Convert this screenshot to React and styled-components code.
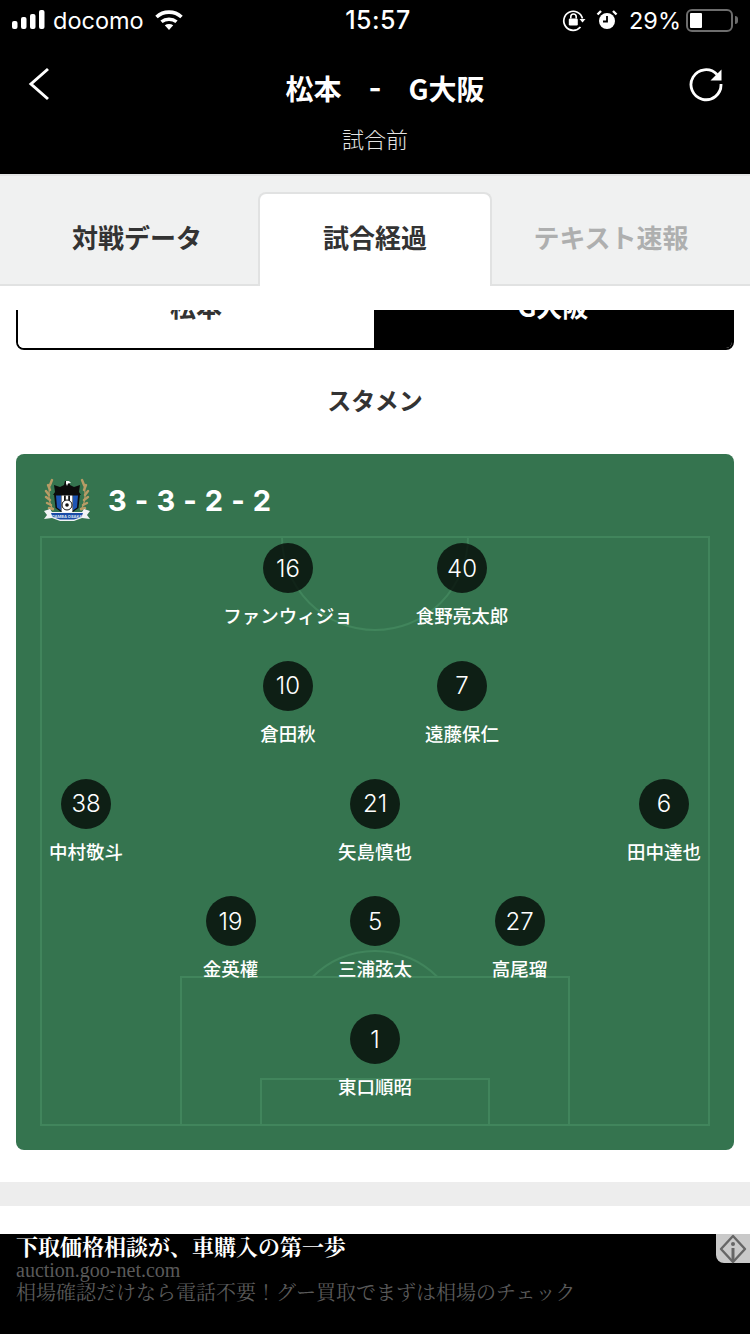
import React from "react";
import styled, { createGlobalStyle } from "styled-components";

const formation = [
  { step: 174, players: [["16", "ファンウィジョ"], ["40", "食野亮太郎"]] },
  { step: 174, players: [["10", "倉田秋"], ["7", "遠藤保仁"]] },
  { step: 289, players: [["38", "中村敬斗"], ["21", "矢島慎也"], ["6", "田中達也"]] },
  { step: 144.5, players: [["19", "金英權"], ["5", "三浦弦太"], ["27", "高尾瑠"]] },
  { step: 174, players: [["1", "東口順昭"]] },
];

const StatusIcons = {
  Signal: () => (
    <svg width="33" height="22" viewBox="0 0 33 22">
      <rect x="0" y="12" width="5.5" height="8" rx="2" fill="#fff" />
      <rect x="9" y="8" width="5.5" height="12" rx="2" fill="#fff" />
      <rect x="18" y="5" width="5.5" height="15" rx="2" fill="#fff" />
      <rect x="27" y="1" width="5.5" height="19" rx="2" fill="#fff" />
    </svg>
  ),
  Wifi: () => (
    <svg width="30" height="22" viewBox="0 0 30 22" fill="none">
      <path d="M2.5 8C9.500 1.500 20.500 1.500 27.500 8" stroke="#fff" strokeWidth="3.600" />
      <path d="M7.500 12.800C11.700 9.300 18.300 9.300 22.500 12.800" stroke="#fff" strokeWidth="3.400" />
      <path d="M10.800 16.200C13.300 14.500 16.700 14.500 19.200 16.200L15 21Z" fill="#fff" />
    </svg>
  ),
  Lock: () => (
    <svg width="24" height="24" viewBox="0 0 24 24" fill="none">
      <path d="M20.500 10.500A9.500 9.500 0 1 0 18.500 19" stroke="#fff" strokeWidth="1.700" />
      <path d="M17.500 11h6l-3 3.600Z" fill="#fff" />
      <rect x="6.800" y="10.500" width="9" height="7" rx="1.200" fill="#fff" />
      <path d="M8.800 10.500V8.700a2.700 2.700 0 0 1 5.400 0V10.500" stroke="#fff" strokeWidth="1.600" />
    </svg>
  ),
  Alarm: () => (
    <svg width="22" height="22" viewBox="0 0 22 22" fill="none">
      <circle cx="11" cy="12" r="8" fill="#fff" />
      <path d="M11 7v5.500H7" stroke="#000" strokeWidth="1.800" />
      <path d="M1.500 5.500 5 2M20.500 5.500 17 2" stroke="#fff" strokeWidth="2.400" />
    </svg>
  ),
};

const TeamCrest = () => (
  <svg width="46" height="46" viewBox="0 0 46 46">
    <g stroke="#b79c66" strokeWidth="2.400" strokeLinecap="round" fill="none">
      <path d="M8 3 6 8M4 8 6 13M2 14 5 18M2 20 6 23M3 26 7 28M5 31 9 32" />
      <path d="M38 3 40 8M42 8 40 13M44 14 41 18M44 20 40 23M43 26 39 28M41 31 37 32" />
      <path d="M7 5C4 14 4 24 9 33M39 5C42 14 42 24 37 33" strokeWidth="1.200" />
    </g>
    <path d="M10 8 16 10 20 8 21 4 25 4 26 8 30 10 36 8 35 15 37 18 H9 L11 15Z" fill="#0c0c0c" />
    <path d="M22 4h3l2 2-3 .6-1 2.400-1-2.400Z" fill="#fff" />
    <path d="M10 17H36L34.500 31 23 39 11.500 31Z" fill="#0c0c0c" />
    <path d="M12 18.500H17V33.500L13 30.500ZM29 18.500H34L33 30.500 29 33.500Z" fill="#1d55b4" />
    <path d="M17.500 18.500H28.500V34.500L23 38 17.500 34.500Z" fill="#fff" />
    <path d="M20 18.500H21.800V26H20ZM24.200 18.500H26V26H24.200Z" fill="#111" />
    <circle cx="23" cy="28" r="5" fill="#fff" stroke="#111" strokeWidth="1" />
    <circle cx="23" cy="28" r="1.800" fill="#111" />
    <path d="M0 34 6 32 8 35H38L40 32 46 34 43 38 46 42 38 41 30 44H16L8 41 0 42 3 38Z" fill="#f2f4f6" />
    <path d="M7 36H39L37.500 40 30 42.500H16L8.500 40Z" fill="#1a4ba6" />
    <CrestText x="23" y="40.500" textAnchor="middle">GAMBA OSAKA</CrestText>
  </svg>
);

const App = () => {
  return (
    <Page>
      <GlobalStyle />
      <TopBar>
        <StatusBar>
          <StatusGroup>
            <StatusIcons.Signal />
            <Carrier>docomo</Carrier>
            <WifiSlot>
              <StatusIcons.Wifi />
            </WifiSlot>
          </StatusGroup>
          <Clock>15:57</Clock>
          <StatusGroup $right>
            <StatusIcons.Lock />
            <AlarmSlot>
              <StatusIcons.Alarm />
            </AlarmSlot>
            <Percent>29%</Percent>
            <Battery>
              <BatteryFill />
            </Battery>
            <BatteryCap />
          </StatusGroup>
        </StatusBar>
        <NavRow>
          <NavButton aria-label="戻る">
            <svg width="24" height="36" viewBox="0 0 24 36" fill="none">
              <path d="M22 3 5 18 22 33" stroke="#fff" strokeWidth="3" />
            </svg>
          </NavButton>
          <MatchTitle>
            <TitleHome>松本</TitleHome>
            <Dash>-</Dash>
            <span>G大阪</span>
          </MatchTitle>
          <NavButton $end aria-label="更新">
            <svg width="36" height="36" viewBox="0 0 36 36" fill="none">
              <path d="M29 8.500A15 15 0 1 0 33 18" stroke="#fff" strokeWidth="2.800" />
              <path d="M33.500 3.500V14.500H22.500Z" fill="#fff" />
            </svg>
          </NavButton>
        </NavRow>
        <MatchState>試合前</MatchState>
      </TopBar>

      <TabBar>
        <Tab>対戦データ</Tab>
        <Tab $active>試合経過</Tab>
        <Tab $disabled>テキスト速報</Tab>
      </TabBar>

      <ScrollArea>
        <TeamToggle>
          <TeamOption>松本</TeamOption>
          <TeamOption $active>G大阪</TeamOption>
        </TeamToggle>

        <SectionTitle>スタメン</SectionTitle>

        <PitchCard>
          <CardHead>
            <TeamCrest />
            <Formation>3 - 3 - 2 - 2</Formation>
          </CardHead>

          <Field>
            <FieldLines viewBox="0 0 670 590" aria-hidden="true">
              <g fill="none" stroke="#41855c" strokeWidth="2">
                <rect x="1" y="1" width="668" height="588" />
                <rect x="141" y="441" width="388" height="148" />
                <rect x="221" y="543" width="228" height="46" />
                <path d="M272.500 441A88 88 0 0 1 397.500 441" />
                <path d="M242 1A93 93 0 0 0 428 1" />
              </g>
            </FieldLines>
            {formation.map((row) => (
              <PlayerRow key={row.players[0][0]} $count={row.players.length} $step={row.step}>
                {row.players.map(([number, name]) => (
                  <Player key={number}>
                    <Number>{number}</Number>
                    <PlayerName>{name}</PlayerName>
                  </Player>
                ))}
              </PlayerRow>
            ))}
          </Field>
        </PitchCard>

        <Divider />
      </ScrollArea>

      <AdBanner>
        <AdTitle>下取価格相談が、車購入の第一歩</AdTitle>
        <AdUrl>auction.goo-net.com</AdUrl>
        <AdText>相場確認だけなら電話不要！グー買取でまずは相場のチェック</AdText>
        <AdInfo>
          <svg width="30" height="30" viewBox="0 0 30 30" fill="none">
            <path d="M15 2 27 15 15 28 3 15Z" stroke="#666" strokeWidth="2.400" strokeLinejoin="round" />
            <circle cx="15" cy="10" r="2" fill="#666" />
            <path d="M15 14v12" stroke="#666" strokeWidth="3" />
          </svg>
        </AdInfo>
      </AdBanner>
    </Page>
  );
};

export default App;

const GlobalStyle = createGlobalStyle`
  html, body {
    margin: 0;
    padding: 0;
    background: #fff;
  }
  * {
    box-sizing: border-box;
  }
`;

const sans = `"Noto Sans CJK JP", "Noto Sans", sans-serif`;
const latin = `Inter, Roboto, "Noto Sans CJK JP", sans-serif`;
const mincho = `"Liberation Serif", "Noto Serif CJK JP", "Noto Sans CJK JP", serif`;

const Page = styled.div`
  width: 750px;
  height: 1334px;
  overflow: hidden;
  display: flex;
  flex-direction: column;
  background: #fff;
  font-family: ${sans};
`;

const TopBar = styled.header`
  height: 174px;
  flex: none;
  background: #000;
  color: #fff;
`;

const StatusBar = styled.div`
  height: 40px;
  padding: 0 12px;
  display: grid;
  grid-template-columns: 1fr auto 1fr;
  align-items: center;
`;

const StatusGroup = styled.div`
  display: flex;
  align-items: center;
  justify-content: ${({ $right }) => ($right ? "flex-end" : "flex-start")};
`;

const Carrier = styled.span`
  margin-left: 8px;
  font-family: ${latin};
  font-size: 23.5px;
  color: #fff;
`;

const WifiSlot = styled.span`
  display: flex;
  margin-left: 10px;
`;

const Clock = styled.span`
  margin-left: 6px;
  font-family: ${latin};
  font-size: 25px;
  font-weight: 500;
  letter-spacing: 0.5px;
`;

const AlarmSlot = styled.span`
  display: flex;
  margin-left: 10px;
`;

const Percent = styled.span`
  margin-left: 11px;
  font-family: ${latin};
  font-size: 23.5px;
`;

const Battery = styled.div`
  width: 47px;
  height: 23px;
  margin-left: 5px;
  padding: 2px;
  border: 2px solid #6d6d6d;
  border-radius: 6px;
`;

const BatteryFill = styled.div`
  width: 12px;
  height: 100%;
  background: #fff;
  border-radius: 1px;
`;

const BatteryCap = styled.div`
  width: 3px;
  height: 8px;
  margin-left: 2px;
  background: #6d6d6d;
  border-radius: 0 3px 3px 0;
`;

const NavRow = styled.div`
  height: 86px;
  padding: 0 26px;
  display: grid;
  grid-template-columns: 1fr auto 1fr;
  align-items: center;
`;

const NavButton = styled.div`
  display: flex;
  margin-top: 2px;
  justify-self: ${({ $end }) => ($end ? "end" : "start")};
`;

const MatchTitle = styled.div`
  display: grid;
  grid-template-columns: 90px auto 90px;
  align-items: center;
  column-gap: 27px;
  font-size: 28px;
  font-weight: 700;
  line-height: 40px;
  margin-top: 10px;
`;

const TitleHome = styled.span`
  justify-self: end;
`;

const Dash = styled.span`
  font-family: ${latin};
  font-weight: 700;
`;

const MatchState = styled.div`
  margin-top: -4px;
  text-align: center;
  font-size: 22px;
  line-height: 32px;
  font-weight: 300;
  color: #e4e4e4;
`;

const TabBar = styled.nav`
  height: 112px;
  flex: none;
  padding: 16px 24px 0 20px;
  display: grid;
  grid-template-columns: 234px 234px 230px;
  column-gap: 4px;
  background: #f0f1f1;
  border-top: 2px solid #e4e5e5;
  border-bottom: 2px solid #e1e2e2;
`;

const Tab = styled.div`
  display: flex;
  align-items: center;
  justify-content: center;
  padding-bottom: ${({ $active }) => ($active ? "8px" : "4px")};
  margin-bottom: ${({ $active }) => ($active ? "-2px" : "0")};
  font-size: 26px;
  font-weight: 700;
  color: ${({ $disabled }) => ($disabled ? "#aeafaf" : "#333")};
  background: ${({ $active }) => ($active ? "#fff" : "transparent")};
  border: ${({ $active }) => ($active ? "2px solid #e1e2e2" : "none")};
  border-bottom: none;
  border-radius: ${({ $active }) => ($active ? "8px 8px 0 0" : "0")};
`;

const ScrollArea = styled.main`
  flex: 1;
  margin-top: 24px;
  overflow: hidden;
`;

const TeamToggle = styled.div`
  height: 80px;
  margin: -40px 16px 0;
  display: grid;
  grid-template-columns: 356px 1fr;
  border: 2px solid #000;
  border-radius: 8px;
  overflow: hidden;
`;

const TeamOption = styled.div`
  display: flex;
  align-items: center;
  justify-content: center;
  padding-bottom: 10px;
  font-size: 26px;
  font-weight: 700;
  color: ${({ $active }) => ($active ? "#fff" : "#333")};
  background: ${({ $active }) => ($active ? "#000" : "#fff")};
`;

const SectionTitle = styled.h2`
  margin: 30px 0 0;
  text-align: center;
  font-size: 24px;
  line-height: 40px;
  font-weight: 700;
  color: #333;
`;

const PitchCard = styled.section`
  height: 696px;
  margin: 34px 16px 0;
  padding: 22px 24px 0;
  background: #35744f;
  border-radius: 8px;
`;

const CardHead = styled.div`
  height: 48px;
  padding-left: 4px;
  display: flex;
  align-items: center;
  gap: 18px;
`;

const CrestText = styled.text`
  font-family: ${latin};
  font-size: 4px;
  font-weight: 700;
  fill: #dfe8f5;
`;

const Formation = styled.div`
  font-family: ${latin};
  font-size: 29px;
  font-weight: 700;
  letter-spacing: 0.6px;
  color: #fff;
`;

const Field = styled.div`
  position: relative;
  width: 670px;
  height: 590px;
  margin-top: 12px;
  padding-top: 7px;
  display: grid;
  grid-template-columns: minmax(0, 1fr);
  grid-auto-rows: 117.8px;
`;

const FieldLines = styled.svg`
  position: absolute;
  inset: 0;
  width: 670px;
  height: 590px;
`;

const PlayerRow = styled.div`
  position: relative;
  display: grid;
  grid-template-columns: repeat(${({ $count }) => $count}, ${({ $step }) => $step}px);
  justify-content: center;
`;

const Player = styled.div`
  display: flex;
  flex-direction: column;
  align-items: center;
`;

const Number = styled.div`
  width: 50px;
  height: 50px;
  display: flex;
  align-items: center;
  justify-content: center;
  border-radius: 50%;
  background: rgba(0, 0, 0, 0.73);
  color: #fff;
  font-family: ${latin};
  font-size: 24px;
  font-weight: 300;
`;

const PlayerName = styled.div`
  margin-top: 8px;
  font-size: 18.5px;
  line-height: 28px;
  font-weight: 500;
  color: #fff;
  white-space: nowrap;
`;

const Divider = styled.div`
  height: 24px;
  margin-top: 32px;
  background: #ededed;
`;

const AdBanner = styled.aside`
  position: relative;
  height: 100px;
  flex: none;
  padding: 1px 16px 0;
  background: #000;
  font-family: ${mincho};
`;

const AdTitle = styled.div`
  font-size: 22px;
  font-weight: 700;
  line-height: 26px;
  color: #fff;
`;

const AdUrl = styled.div`
  font-size: 20px;
  line-height: 18px;
  color: #5a5a5a;
`;

const AdText = styled.div`
  margin-top: 1px;
  font-size: 20px;
  line-height: 26px;
  color: #5a5a5a;
`;

const AdInfo = styled.div`
  position: absolute;
  top: 0;
  right: 0;
  width: 34px;
  height: 29px;
  padding-left: 2px;
  display: flex;
  align-items: center;
  background: #c9c9c9;
  border-bottom-left-radius: 8px;
`;
